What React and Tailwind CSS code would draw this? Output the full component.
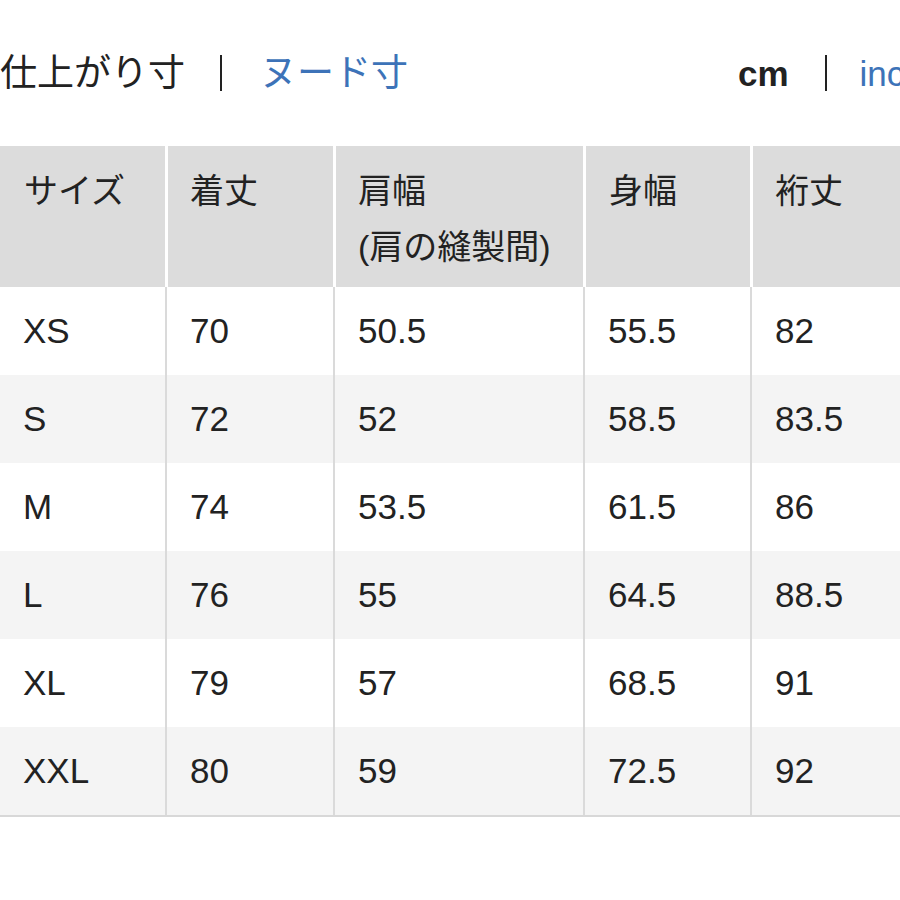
const rows = [
  ['XS', '70', '50.5', '55.5', '82'],
  ['S', '72', '52', '58.5', '83.5'],
  ['M', '74', '53.5', '61.5', '86'],
  ['L', '76', '55', '64.5', '88.5'],
  ['XL', '79', '57', '68.5', '91'],
  ['XXL', '80', '59', '72.5', '92'],
];

const font = { fontFamily: '"Liberation Sans", "Noto Sans CJK JP", sans-serif' };

export default function App() {
  return (
    <div className="w-[900px] h-[900px] bg-white overflow-hidden text-[#222]" style={font}>
      {/* Tabs */}
      <div className="h-[146px] flex items-start pt-[50px] whitespace-nowrap">
        <div className="flex items-center h-[46px] w-[738px] shrink-0">
          <span className="text-[37px] leading-none">仕上がり寸</span>
          <span className="w-[2px] h-[36px] bg-[#222] ml-[35px]"></span>
          <span className="text-[37px] leading-none text-[#3d73b8] ml-[38px]">ヌード寸</span>
        </div>
        <div className="flex items-center h-[46px] shrink-0">
          <span className="text-[35px] leading-none font-bold">cm</span>
          <span className="w-[2px] h-[36px] bg-[#222] ml-[36px]"></span>
          <span className="text-[35px] leading-none text-[#3d73b8] ml-[33px]">inch</span>
        </div>
      </div>

      {/* Table */}
      <div className="w-[920px]">
        <div className="grid grid-cols-[165px_168px_250px_167px_170px] h-[141px] text-[34px]">
          <div className="bg-[#dcdcdc] pl-[24px] pt-[17px] leading-[56px]">サイズ</div>
          <div className="bg-[#dcdcdc] border-l-[3px] border-white pl-[22px] pt-[17px] leading-[56px]">着丈</div>
          <div className="bg-[#dcdcdc] border-l-[3px] border-white pl-[22px] pt-[17px] leading-[56px]">
            <div>肩幅</div>
            <div>(肩の縫製間)</div>
          </div>
          <div className="bg-[#dcdcdc] border-l-[3px] border-white pl-[23px] pt-[17px] leading-[56px]">身幅</div>
          <div className="bg-[#dcdcdc] border-l-[3px] border-white pl-[22px] pt-[17px] leading-[56px]">裄丈</div>
        </div>
        <div className="border-b-2 border-[#d8d8d8]">
          {rows.map((r, i) => (
            <div
              key={r[0]}
              className={`grid grid-cols-[165px_168px_250px_167px_170px] h-[88px] text-[35px] ${i % 2 === 1 ? 'bg-[#f4f4f4]' : 'bg-white'}`}
            >
              {r.map((c, j) => (
                <div
                  key={j}
                  className={`flex items-center ${j === 0 ? 'pl-[23px]' : 'pl-[23px] border-l-2 border-[#dadada]'}`}
                >
                  {c}
                </div>
              ))}
            </div>
          ))}
        </div>
      </div>
    </div>
  );
}
